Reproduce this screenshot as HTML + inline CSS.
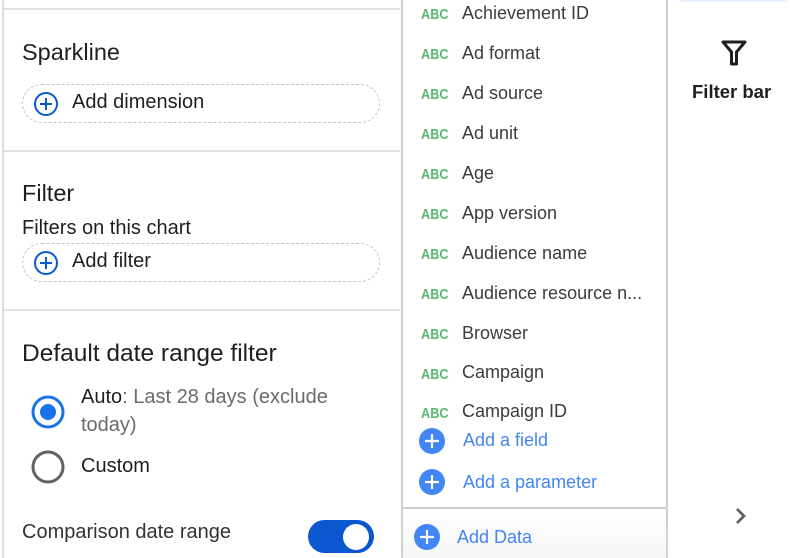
<!DOCTYPE html>
<html><head><style>
*{margin:0;padding:0;box-sizing:border-box}
body{width:800px;height:558px;overflow:hidden;background:#fff;font-family:"Liberation Sans",Arial,sans-serif;color:#202124;position:relative}
.a{position:absolute;white-space:nowrap}
.hl{position:absolute;height:2px;background:#e3e3e3}
.h{font-size:23.5px;color:#1f1f1f}
.t{font-size:20px;color:#1f1f1f}
.dash{position:absolute;left:22px;width:358px;height:39px;border:1.5px dashed #c4c4c4;border-radius:20px}
.abc{position:absolute;left:421px;font-size:15px;font-weight:bold;color:#5bb974;font-family:"Liberation Sans Narrow","Liberation Sans",sans-serif;transform:scaleX(0.85);transform-origin:left}
.it{position:absolute;left:462px;font-size:18px;color:#3c3c3c}
.bl{color:#4285f4;font-size:18px}
</style></head><body>
<div class="a" style="left:2px;top:0;width:2px;height:558px;background:#dcdcdc"></div>
<div class="hl" style="left:4px;top:8px;width:396px"></div>
<div class="hl" style="left:4px;top:150px;width:396px"></div>
<div class="hl" style="left:4px;top:309px;width:396px"></div>

<div class="a h" style="left:22px;top:39px">Sparkline</div>
<div class="dash" style="top:84px"></div>
<svg class="a" style="left:33px;top:91px" width="26" height="26" viewBox="0 0 26 26"><circle cx="13" cy="13" r="11" fill="none" stroke="#0b57d0" stroke-width="2"/><path d="M13 7v12M7 13h12" stroke="#0b57d0" stroke-width="2"/></svg>
<div class="a t" style="left:72px;top:91px">Add dimension</div>

<div class="a h" style="left:22px;top:180px">Filter</div>
<div class="a t" style="left:22px;top:217px">Filters on this chart</div>
<div class="dash" style="top:243px"></div>
<svg class="a" style="left:33px;top:250px" width="26" height="26" viewBox="0 0 26 26"><circle cx="13" cy="13" r="11" fill="none" stroke="#0b57d0" stroke-width="2"/><path d="M13 7v12M7 13h12" stroke="#0b57d0" stroke-width="2"/></svg>
<div class="a t" style="left:72px;top:250px">Add filter</div>

<div class="a h" style="left:22px;top:340px;font-size:24.5px">Default date range filter</div>
<svg class="a" style="left:30px;top:394px" width="36" height="36"><circle cx="18" cy="18" r="15" fill="none" stroke="#1a73e8" stroke-width="3"/><circle cx="18" cy="18" r="8" fill="#1a73e8"/></svg>
<div class="a t" style="left:81px;top:386px">Auto<span style="color:#6b6b6b">: Last 28 days (exclude</span></div>
<div class="a t" style="left:81px;top:414px;color:#6b6b6b">today)</div>
<svg class="a" style="left:30px;top:449px" width="36" height="36"><circle cx="18" cy="18" r="15" fill="none" stroke="#5f6368" stroke-width="3"/></svg>
<div class="a t" style="left:81px;top:455px">Custom</div>
<div class="a t" style="left:22px;top:521px;color:#333">Comparison date range</div>
<div class="a" style="left:308px;top:520px;width:66px;height:33px;border-radius:17px;background:#0b57d0"></div>
<div class="a" style="left:343px;top:524px;width:26px;height:26px;border-radius:13px;background:#fff"></div>

<div class="a" style="left:401px;top:0;width:2px;height:558px;background:#d0d0d0"></div>
<div class="a" style="left:666px;top:0;width:2px;height:558px;background:#d0d0d0"></div>
<div class="abc" style="top:6px">ABC</div><div class="it" style="top:3px">Achievement ID</div>
<div class="abc" style="top:46px">ABC</div><div class="it" style="top:43px">Ad format</div>
<div class="abc" style="top:86px">ABC</div><div class="it" style="top:83px">Ad source</div>
<div class="abc" style="top:126px">ABC</div><div class="it" style="top:123px">Ad unit</div>
<div class="abc" style="top:166px">ABC</div><div class="it" style="top:163px">Age</div>
<div class="abc" style="top:206px">ABC</div><div class="it" style="top:203px">App version</div>
<div class="abc" style="top:246px">ABC</div><div class="it" style="top:243px">Audience name</div>
<div class="abc" style="top:286px">ABC</div><div class="it" style="top:283px">Audience resource n...</div>
<div class="abc" style="top:326px">ABC</div><div class="it" style="top:323px">Browser</div>
<div class="abc" style="top:366px">ABC</div><div class="it" style="top:362px">Campaign</div>
<div class="abc" style="top:405px">ABC</div><div class="it" style="top:401px;height:21px;overflow:hidden">Campaign ID</div>
<svg class="a" style="left:418px;top:427px" width="28" height="28"><circle cx="14" cy="14" r="13" fill="#4285f4"/><path d="M14 7v14M7 14h14" stroke="#fff" stroke-width="2.2"/></svg>
<div class="a bl" style="left:463px;top:430px">Add a field</div>
<svg class="a" style="left:418px;top:468px" width="28" height="28"><circle cx="14" cy="14" r="13" fill="#4285f4"/><path d="M14 7v14M7 14h14" stroke="#fff" stroke-width="2.2"/></svg>
<div class="a bl" style="left:463px;top:472px">Add a parameter</div>
<div class="a" style="left:403px;top:507px;width:263px;height:2px;background:#d0d0d0"></div>
<div class="a" style="left:403px;top:509px;width:263px;height:49px;background:linear-gradient(#fff,#f6f6f6)"></div>
<svg class="a" style="left:413px;top:523px" width="28" height="28"><circle cx="14" cy="14" r="13" fill="#4285f4"/><path d="M14 7v14M7 14h14" stroke="#fff" stroke-width="2.2"/></svg>
<div class="a bl" style="left:457px;top:527px">Add Data</div>

<div class="a" style="left:680px;top:0;width:107px;height:2px;background:#e8f0fe"></div>
<svg class="a" style="left:720px;top:38px" width="28" height="30" viewBox="0 0 28 30"><path d="M3 4h22l-8.5 10v12h-5V14z" fill="none" stroke="#1f1f1f" stroke-width="3" stroke-linejoin="round"/></svg>
<div class="a" style="left:692px;top:81px;font-size:18.5px;font-weight:bold;color:#1f1f1f">Filter bar</div>
<svg class="a" style="left:733px;top:506px" width="16" height="20"><path d="M4 3l7 7-7 7" fill="none" stroke="#5f6368" stroke-width="2.8"/></svg>
</body></html>
